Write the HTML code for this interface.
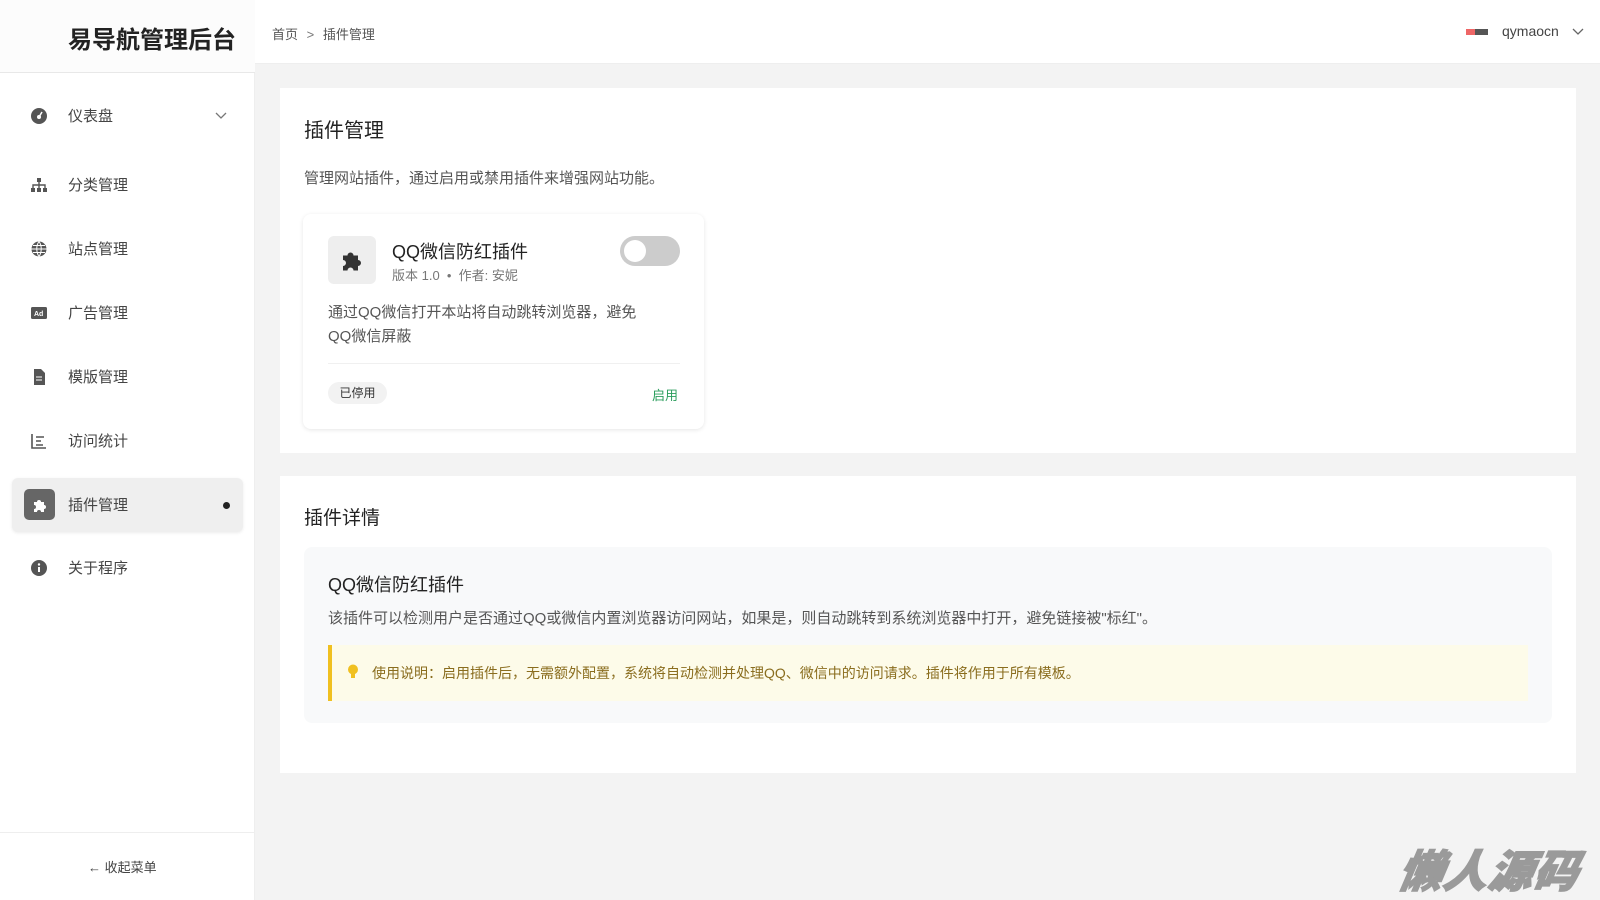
<!DOCTYPE html>
<html><head><meta charset="utf-8"><style>
*{margin:0;padding:0;box-sizing:border-box}
body{width:1600px;height:900px;background:#f3f3f3;font-family:"Liberation Sans","Noto Sans CJK SC",sans-serif;color:#333;position:relative;overflow:hidden}
.abs{position:absolute}
.side{left:0;top:0;width:255px;height:900px;background:#fff;border-right:1px solid #eee}
.logo{left:0;top:0;width:255px;height:73px;border-bottom:1px solid #e8e8e8;background:#fcfcfc}
.logo span{position:absolute;left:68px;top:20px;font-size:24px;font-weight:bold;color:#222}
.mi{left:12px;width:231px;height:54px;font-size:15px;color:#444}
.mi .ic{position:absolute;left:19px;top:19px;width:16px;height:16px}
.mi .t{position:absolute;left:56px;top:16px}
.act{background:#efefef;border-radius:6px;box-shadow:0 1px 3px rgba(0,0,0,.08)}
.hdr{left:255px;top:0;width:1345px;height:64px;background:#fff;border-bottom:1px solid #eee}
.card{background:#fff}
</style></head><body>
<div class="abs side"></div>
<div class="abs logo"><span>易导航管理后台</span></div>

<div class="abs mi" style="top:89px"><svg class="ic" viewBox="0 0 16 16"><circle cx="8" cy="8" r="8" fill="#555"/><circle cx="8" cy="9" r="2" fill="#fff"/><path d="M8 9L11 4" stroke="#fff" stroke-width="1.5"/></svg><span class="t">仪表盘</span><svg class="abs" style="left:203px;top:23px" width="12" height="8" viewBox="0 0 12 8"><path d="M1 1l5 5 5-5" fill="none" stroke="#777" stroke-width="1.3"/></svg></div>
<div class="abs mi" style="top:158px"><svg class="ic" viewBox="0 0 16 16" fill="#555"><rect x="6" y="1" width="4" height="4"/><rect x="0" y="11" width="4" height="4"/><rect x="6" y="11" width="4" height="4"/><rect x="12" y="11" width="4" height="4"/><path d="M2 11V8h12v3M8 5v6" stroke="#555" fill="none" stroke-width="1.4"/></svg><span class="t">分类管理</span></div>
<div class="abs mi" style="top:222px"><svg class="ic" viewBox="0 0 16 16"><circle cx="8" cy="8" r="7.5" fill="#555"/><path d="M0.5 8h15M8 .5c-3 4-3 11 0 15M8 .5c3 4 3 11 0 15M2 4.5h12M2 11.5h12" stroke="#fff" fill="none" stroke-width="1"/></svg><span class="t">站点管理</span></div>
<div class="abs mi" style="top:286px"><svg class="ic" viewBox="0 0 16 16"><rect x="0" y="2" width="16" height="12" rx="1.5" fill="#555"/><text x="3" y="11" font-size="7" font-weight="bold" fill="#fff" font-family="Liberation Sans">Ad</text></svg><span class="t">广告管理</span></div>
<div class="abs mi" style="top:350px"><svg class="ic" viewBox="0 0 16 16"><path d="M3 0h7l4 4v12H3z" fill="#555"/><path d="M5 8h6M5 11h6" stroke="#fff"/></svg><span class="t">模版管理</span></div>
<div class="abs mi" style="top:414px"><svg class="ic" viewBox="0 0 16 16" fill="none" stroke="#555" stroke-width="1.6"><path d="M1 1v14h14M5 4h8M5 8h5M5 12h7"/></svg><span class="t">访问统计</span></div>
<div class="abs mi act" style="top:478px"><div class="abs" style="left:12px;top:11px;width:31px;height:31px;background:#666;border-radius:5px"></div><svg class="ic" viewBox="0 0 16 16" style="left:20px"><path d="M2 5h3a2 2 0 1 1 4 0h3v3a2 2 0 1 1 0 4v3H9a2 2 0 1 0-4 0H2v-3a2 2 0 1 0 0-4z" fill="#fff"/></svg><span class="t">插件管理</span><div class="abs" style="left:211px;top:24px;width:7px;height:7px;border-radius:50%;background:#222"></div></div>
<div class="abs mi" style="top:541px"><svg class="ic" viewBox="0 0 16 16"><circle cx="8" cy="8" r="8" fill="#555"/><rect x="7" y="7" width="2" height="5" fill="#fff"/><circle cx="8" cy="4.5" r="1.2" fill="#fff"/></svg><span class="t">关于程序</span></div>
<div class="abs" style="left:0;top:832px;width:255px;border-top:1px solid #eee"></div>
<div class="abs" style="left:88px;top:857px;font-size:13px;color:#444">&#8592; 收起菜单</div>

<div class="abs hdr"></div>
<div class="abs" style="left:272px;top:24px;font-size:13px;color:#555">首页 <span style="margin:0 5px;color:#777">&gt;</span> 插件管理</div>
<div class="abs" style="left:1466px;top:29px;width:22px;height:6px;background:linear-gradient(90deg,#e66 0 40%,#555 40%)"></div>
<div class="abs" style="left:1502px;top:23px;font-size:14px;color:#444">qymaocn</div>
<svg class="abs" style="left:1572px;top:28px" width="12" height="8" viewBox="0 0 12 8"><path d="M1 1l5 5 5-5" fill="none" stroke="#666" stroke-width="1.3"/></svg>

<div class="abs card" style="left:280px;top:88px;width:1296px;height:365px"></div>
<div class="abs" style="left:304px;top:114px;font-size:20px;color:#222">插件管理</div>
<div class="abs" style="left:304px;top:167px;font-size:15px;color:#555">管理网站插件，通过启用或禁用插件来增强网站功能。</div>
<div class="abs" style="left:303px;top:214px;width:401px;height:215px;background:#fff;border-radius:8px;box-shadow:0 1px 4px rgba(0,0,0,.1)"></div>
<div class="abs" style="left:328px;top:236px;width:48px;height:48px;background:#eee;border-radius:6px"></div>
<svg class="abs" style="left:340px;top:248px" width="24" height="24" viewBox="0 0 16 16"><path d="M2 5h3a2 2 0 1 1 4 0h3v3a2 2 0 1 1 0 4v3H9a2 2 0 1 0-4 0H2v-3a2 2 0 1 0 0-4z" fill="#333"/></svg>
<div class="abs" style="left:392px;top:238px;font-size:18px;color:#222">QQ微信防红插件</div>
<div class="abs" style="left:392px;top:265px;font-size:13px;color:#777">版本 1.0 &nbsp;•&nbsp; 作者: 安妮</div>
<div class="abs" style="left:620px;top:236px;width:60px;height:30px;border-radius:15px;background:#ccc"></div>
<div class="abs" style="left:624px;top:240px;width:22px;height:22px;border-radius:50%;background:#fff"></div>
<div class="abs" style="left:328px;top:301px;width:335px;font-size:15px;line-height:24px;color:#555">通过QQ微信打开本站将自动跳转浏览器，避免<br>QQ微信屏蔽</div>
<div class="abs" style="left:328px;top:363px;width:352px;border-top:1px solid #f0f0f0"></div>
<div class="abs" style="left:328px;top:382px;width:59px;height:22px;border-radius:11px;background:#f2f2f2;font-size:12px;line-height:22px;text-align:center;color:#333">已停用</div>
<div class="abs" style="left:652px;top:385px;font-size:13px;color:#2a9d5c">启用</div>

<div class="abs card" style="left:280px;top:476px;width:1296px;height:297px"></div>
<div class="abs" style="left:304px;top:503px;font-size:19px;color:#222">插件详情</div>
<div class="abs" style="left:304px;top:547px;width:1248px;height:176px;background:#f8f9fa;border-radius:8px"></div>
<div class="abs" style="left:328px;top:571px;font-size:18px;color:#222">QQ微信防红插件</div>
<div class="abs" style="left:328px;top:607px;font-size:15px;color:#555">该插件可以检测用户是否通过QQ或微信内置浏览器访问网站，如果是，则自动跳转到系统浏览器中打开，避免链接被"标红"。</div>
<div class="abs" style="left:328px;top:645px;width:1200px;height:56px;background:#fdfbe9;border-left:4px solid #f0c020"></div>
<svg class="abs" style="left:347px;top:664px" width="12" height="15" viewBox="0 0 12 15"><circle cx="6" cy="5.5" r="5" fill="#f0c020"/><rect x="4" y="10" width="4" height="4" fill="#f0c020"/></svg>
<div class="abs" style="left:372px;top:663px;font-size:14px;color:#8a6d1e">使用说明：启用插件后，无需额外配置，系统将自动检测并处理QQ、微信中的访问请求。插件将作用于所有模板。</div>

<div class="abs" style="left:1400px;top:836px;font-size:44px;font-weight:900;font-style:italic;color:#9a9a9a;letter-spacing:1px;transform:skewX(-10deg);-webkit-text-stroke:1.5px #9a9a9a">懒人源码</div>
</body></html>
